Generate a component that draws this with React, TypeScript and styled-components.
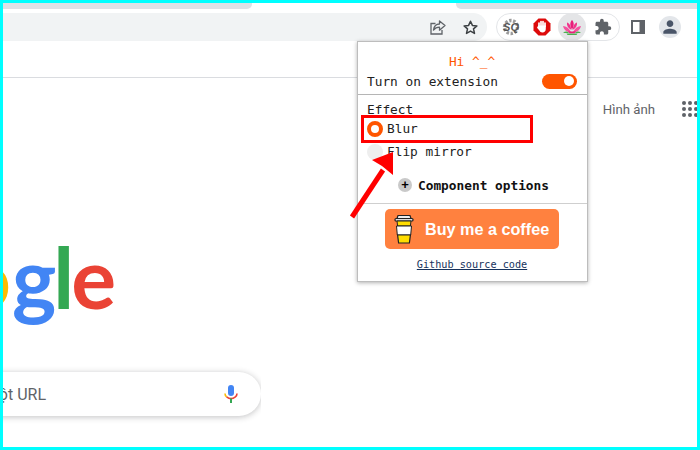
import React from "react";
import styled, { createGlobalStyle } from "styled-components";
import { MdExtension, MdPerson } from "react-icons/md";

const GlobalStyle = createGlobalStyle`
  html, body {
    margin: 0;
    padding: 0;
    background: #fff;
  }
`;

const MONO = `"DejaVu Sans Mono", "Liberation Mono", monospace`;

// The whole shot, with its cyan outline
const Frame = styled.div`
  position: relative;
  box-sizing: border-box;
  width: 700px;
  height: 450px;
  border: 3px solid #00ffff;
  background: #fff;
  overflow: hidden;
  font-family: Roboto, "Liberation Sans", sans-serif;
`;

const TabStrip = styled.div`
  display: flex;
  justify-content: space-between;
  height: 6px;
`;

const TabEdge = styled.div<{ $side: "left" | "right" }>`
  width: ${(p) => (p.$side === "left" ? "249px" : "241px")};
  background: #dee1e6;
  border-bottom-${(p) => (p.$side === "left" ? "right" : "left")}-radius: 5px;
`;

const Toolbar = styled.div`
  display: flex;
  align-items: center;
  height: 28px;
  margin-top: 4px;
`;

const AddressBar = styled.div`
  display: flex;
  justify-content: flex-end;
  align-items: center;
  gap: 17px;
  box-sizing: border-box;
  width: 484px;
  height: 28px;
  padding-right: 9px;
  background: #f1f3f4;
  border-radius: 0 14px 14px 0;
`;

const ExtensionPill = styled.div`
  display: flex;
  align-items: center;
  box-sizing: border-box;
  width: 124px;
  height: 28px;
  margin-left: 9px;
  border: 1px solid #e3e5e8;
  border-radius: 14px;
`;

const ExtensionSlot = styled.div<{ $width: number; $active?: boolean }>`
  display: flex;
  align-items: center;
  justify-content: center;
  flex: none;
  width: ${(p) => p.$width}px;
  height: 28px;
  border-radius: 50%;
  background: ${(p) => (p.$active ? "#e4e5e7" : "transparent")};
  color: #5f6368;
`;

const SidePanelButton = styled.div`
  display: flex;
  margin-left: 11px;
`;

const Avatar = styled.div`
  display: flex;
  align-items: center;
  justify-content: center;
  width: 22px;
  height: 22px;
  margin-left: 14px;
  border-radius: 50%;
  background: #e3e6ea;
  color: #4a5568;
`;

const NavBar = styled.div`
  height: 36px;
  border-bottom: 1px solid #dadce0;
`;

const LinkRow = styled.div`
  display: flex;
  align-items: center;
  justify-content: flex-end;
  height: 20px;
  margin-top: 21px;
  margin-right: -1px;
`;

const LinkText = styled.span`
  font-size: 13.2px;
  color: #5f6368;
`;

const AppsGrid = styled.div`
  display: grid;
  grid-template-columns: repeat(3, 4px);
  gap: 2px;
  margin-left: 27px;
`;

const AppsDot = styled.span`
  width: 4px;
  height: 4px;
  border-radius: 50%;
  background: #5f6368;
`;

// Left part of the page, cut off by the edge of the shot
const Hero = styled.div`
  display: flex;
  flex-direction: column;
  align-items: flex-end;
  width: 258px;
  margin-top: 113px;
  padding-bottom: 10px;
  overflow: hidden;
`;

const Logo = styled.div`
  display: flex;
  flex: none;
  height: 90px;
  margin-right: 148px;
  font-family: Lato, "Open Sans", sans-serif;
  font-size: 84px;
  font-weight: 700;
  line-height: 90px;
  letter-spacing: -3px;
  white-space: nowrap;
`;

const LogoLetter = styled.span<{ $color: string; $gap?: number }>`
  margin-right: ${(p) => p.$gap ?? 0}px;
  color: ${(p) => p.$color};
`;

const SearchBar = styled.div`
  display: flex;
  flex: none;
  align-items: center;
  justify-content: flex-end;
  box-sizing: border-box;
  width: 600px;
  height: 44px;
  margin-top: 50px;
  padding-right: 23px;
  background: #fff;
  border-radius: 22px;
  box-shadow: 0 1px 6px rgba(32, 33, 36, 0.28);
`;

const SearchHint = styled.span`
  margin-right: 178px;
  font-size: 16px;
  color: #5f6368;
  white-space: nowrap;
`;

const MicGlyph = styled.svg`
  flex: none;
`;

// Extension popup, lies over the page
const Popup = styled.div`
  position: absolute;
  top: 38px;
  left: 354px;
  box-sizing: border-box;
  width: 231px;
  height: 241px;
  background: #fff;
  border: 1px solid #bdbdbd;
  box-shadow: 0 1px 4px rgba(0, 0, 0, 0.3);
  font-family: ${MONO};
  font-size: 12.8px;
  color: #222;
`;

const PopupHead = styled.div`
  padding: 11px 10px 2px 9px;
  border-bottom: 1px solid #b5b5b5;
`;

const Greeting = styled.div`
  height: 17px;
  line-height: 18px;
  text-align: center;
  color: #ff5500;
`;

const SwitchRow = styled.div`
  display: flex;
  align-items: center;
  justify-content: space-between;
  height: 22px;
`;

const Toggle = styled.div`
  display: flex;
  align-items: center;
  justify-content: flex-end;
  box-sizing: border-box;
  width: 35px;
  height: 15px;
  padding-right: 3px;
  background: #ff5500;
  border-radius: 8px;
`;

const ToggleKnob = styled.div`
  width: 10px;
  height: 10px;
  border-radius: 50%;
  background: #fff;
`;

const EffectSection = styled.div`
  padding: 7px 9px 0;
`;

const EffectTitle = styled.div`
  height: 15px;
  line-height: 16px;
`;

const RadioRow = styled.div`
  display: flex;
  align-items: center;
  gap: 4px;
  height: 23px;
`;

const RadioDot = styled.div<{ $checked?: boolean }>`
  box-sizing: border-box;
  width: 16px;
  height: 16px;
  border-radius: 50%;
  background: ${(p) => (p.$checked ? "#fff" : "#eeeeee")};
  border: ${(p) => (p.$checked ? "4px solid #ff5500" : "none")};
`;

const OptionsRow = styled.div`
  display: flex;
  align-items: center;
  gap: 6px;
  height: 34px;
  margin-top: 5px;
  padding-left: 40px;
  padding-bottom: 1px;
  border-bottom: 1px solid #cfcfcf;
  font-weight: 700;
  color: #111;
`;

const PlusBadge = styled.div`
  display: flex;
  align-items: center;
  justify-content: center;
  width: 14px;
  height: 14px;
  border-radius: 50%;
  background: #c9c9c9;
  font-family: "Liberation Sans", sans-serif;
  font-size: 13px;
  line-height: 14px;
  color: #000;
`;

const CoffeeSection = styled.div`
  display: flex;
  flex-direction: column;
  align-items: center;
  padding: 5px 1px 0 0;
`;

const CoffeeButton = styled.div`
  display: flex;
  align-items: center;
  gap: 11px;
  box-sizing: border-box;
  width: 174px;
  height: 40px;
  padding-left: 9px;
  background: #ff813f;
  border-radius: 5px;
  font-family: "Liberation Sans", sans-serif;
  font-size: 16.2px;
  font-weight: 700;
  color: #fff;
`;

const SourceLink = styled.a`
  margin-top: 10px;
  font-size: 10.2px;
  line-height: 12px;
  color: #16325c;
  text-decoration: underline;
`;

// Red marks someone drew on the screenshot
const HighlightBox = styled.div`
  position: absolute;
  top: 112px;
  left: 358px;
  box-sizing: border-box;
  width: 172px;
  height: 28px;
  border: 3px solid #ff0000;
`;

const ArrowMark = styled.svg`
  position: absolute;
  top: 145px;
  left: 343px;
`;

const ShareIcon = () => (
  <svg width="16" height="15" viewBox="0 0 16 15" fill="none" stroke="#5f6368" strokeWidth="1.3">
    <path d="M5.5 3.5H1v10.5h11v-4" />
    <path d="M9.5 1v3C6 4 4 6.5 3.5 10 5 8 7 7.2 9.5 7.2v3L15 5.5z" strokeLinejoin="round" />
  </svg>
);

const StarIcon = () => (
  <svg width="15" height="15" viewBox="0 0 15 15" fill="none" stroke="#3c4043" strokeWidth="1.5" strokeLinejoin="round">
    <path d="M7.5 1.2l1.9 4.2 4.5.5-3.4 3 1 4.5-4-2.3-4 2.3 1-4.5-3.4-3 4.5-.5z" />
  </svg>
);

const SqIcon = () => (
  <svg width="18" height="18" viewBox="0 0 18 18">
    <circle cx="9" cy="9" r="6.5" fill="none" stroke="#9a9a9a" strokeWidth="3.4" strokeDasharray="2.4 1.6" />
    <text x="9" y="13" textAnchor="middle" fontFamily="Liberation Sans" fontSize="11" fontWeight="700" fontStyle="italic" fill="#555">
      SQ
    </text>
  </svg>
);

const HandIcon = () => (
  <svg width="18" height="18" viewBox="0 0 18 18">
    <path d="M5.500 0.500h7l5 5v7l-5 5h-7l-5-5v-7z" fill="#dd0a0a" />
    <path d="M6 8V5M8 8V3.600M10 8V3.600M12 8.500V5" stroke="#fff" strokeWidth="1.700" strokeLinecap="round" />
    <path d="M5.200 7.500h7.600v3.500c0 2-1.400 3.600-3.400 3.600-1.600 0-2.400-.8-3-2L4 9.800z" fill="#fff" />
  </svg>
);

const LotusIcon = () => (
  <svg width="20" height="17" viewBox="0 0 20 17">
    <path d="M1 13.500c3-1.600 5-1 6 .5H2.500zM19 13.500c-3-1.600-5-1-6 .5h4.500z" fill="#4caf50" />
    <path d="M4.500 14.500h11l-1 1.500h-9z" fill="#4caf50" />
    <path d="M10 1c2 2 2.500 5 0 9.500C7.500 6 8 3 10 1z" fill="#e91e7a" />
    <path d="M5 3.500c2 .5 3.500 2.500 4.500 7.500C6 9 4.600 6.500 5 3.500zM15 3.500c-2 .5-3.500 2.500-4.500 7.500 3.500-2 4.900-4.500 4.500-7.500z" fill="#f0348c" />
    <path d="M1 7c3 0 6 2 8 6-4 .5-7-2-8-6zM19 7c-3 0-6 2-8 6 4 .5 7-2 8-6z" fill="#f4529f" />
    <path d="M6 12.500h8l-1.500 1.700h-5z" fill="#e91e7a" />
  </svg>
);

const SidePanelIcon = () => (
  <svg width="14" height="14" viewBox="0 0 14 14">
    <rect width="14" height="14" fill="#5f6368" />
    <rect x="2" y="2" width="6.500" height="10" fill="#fff" />
  </svg>
);

const MicIcon = () => (
  <MicGlyph width="14" height="18" viewBox="0 0 14 18" fill="none">
    <rect x="4" y="0" width="6" height="11" rx="3" fill="#4285f4" />
    <path d="M1 8.500c0 1.500.6 2.600 1.600 3.400" stroke="#fbbc05" strokeWidth="1.600" />
    <path d="M2.600 11.900c2.600 2 6.200 2 8.800 0 1-.8 1.600-1.900 1.600-3.400" stroke="#ea4335" strokeWidth="1.600" />
    <path d="M7 13.500V18" stroke="#34a853" strokeWidth="2" />
  </MicGlyph>
);

const CupIcon = () => (
  <svg width="20" height="30" viewBox="0 0 20 30">
    <path d="M4 1.500h12l1 3H3z" fill="#eee" stroke="#222" strokeWidth="1.200" />
    <rect x="1" y="4.500" width="18" height="2.500" rx="1" fill="#ddd" stroke="#222" strokeWidth="1.200" />
    <path d="M3 7h14l-.6 5H3.600z" fill="#ffdd00" stroke="#222" strokeWidth="1" />
    <path d="M2.500 12h15l-.8 9H3.300z" fill="#fff" stroke="#222" strokeWidth="1" />
    <path d="M3.600 21h12.800l-1 8H4.600z" fill="#ffdd00" stroke="#222" strokeWidth="1.200" />
  </svg>
);

const App: React.FC = () => {
  return (
    <Frame>
      <GlobalStyle />
      <TabStrip>
        <TabEdge $side="left" />
        <TabEdge $side="right" />
      </TabStrip>
      <Toolbar>
        <AddressBar>
          <ShareIcon />
          <StarIcon />
        </AddressBar>
        <ExtensionPill>
          <ExtensionSlot $width={28}>
            <SqIcon />
          </ExtensionSlot>
          <ExtensionSlot $width={33}>
            <HandIcon />
          </ExtensionSlot>
          <ExtensionSlot $width={28} $active>
            <LotusIcon />
          </ExtensionSlot>
          <ExtensionSlot $width={33}>
            <MdExtension size={18} />
          </ExtensionSlot>
        </ExtensionPill>
        <SidePanelButton>
          <SidePanelIcon />
        </SidePanelButton>
        <Avatar>
          <MdPerson size={20} />
        </Avatar>
      </Toolbar>
      <NavBar />
      <LinkRow>
        <LinkText>Hình ảnh</LinkText>
        <AppsGrid>
          {Array.from({ length: 9 }).map((_, i) => (
            <AppsDot key={i} />
          ))}
        </AppsGrid>
      </LinkRow>
      <Hero>
        <Logo>
          <LogoLetter $color="#fbbc05" $gap={4}>o</LogoLetter>
          <LogoLetter $color="#4285f4">g</LogoLetter>
          <LogoLetter $color="#34a853">l</LogoLetter>
          <LogoLetter $color="#ea4335">e</LogoLetter>
        </Logo>
        <SearchBar>
          <SearchHint>Tìm kiếm trên Google hoặc nhập một URL</SearchHint>
          <MicIcon />
        </SearchBar>
      </Hero>
      <Popup>
        <PopupHead>
          <Greeting>Hi ^_^</Greeting>
          <SwitchRow>
            Turn on extension
            <Toggle>
              <ToggleKnob />
            </Toggle>
          </SwitchRow>
        </PopupHead>
        <EffectSection>
          <EffectTitle>Effect</EffectTitle>
          <RadioRow>
            <RadioDot $checked />
            Blur
          </RadioRow>
          <RadioRow>
            <RadioDot />
            Flip mirror
          </RadioRow>
        </EffectSection>
        <OptionsRow>
          <PlusBadge>+</PlusBadge>
          Component options
        </OptionsRow>
        <CoffeeSection>
          <CoffeeButton>
            <CupIcon />
            Buy me a coffee
          </CoffeeButton>
          <SourceLink>Github source code</SourceLink>
        </CoffeeSection>
      </Popup>
      <HighlightBox />
      <ArrowMark width="50" height="76" viewBox="0 0 50 76">
        <path d="M6 69L37 22" stroke="#ff0000" strokeWidth="5" />
        <path d="M47 4L47 27 36 18 26 12z" fill="#ff0000" />
      </ArrowMark>
    </Frame>
  );
};

export default App;
